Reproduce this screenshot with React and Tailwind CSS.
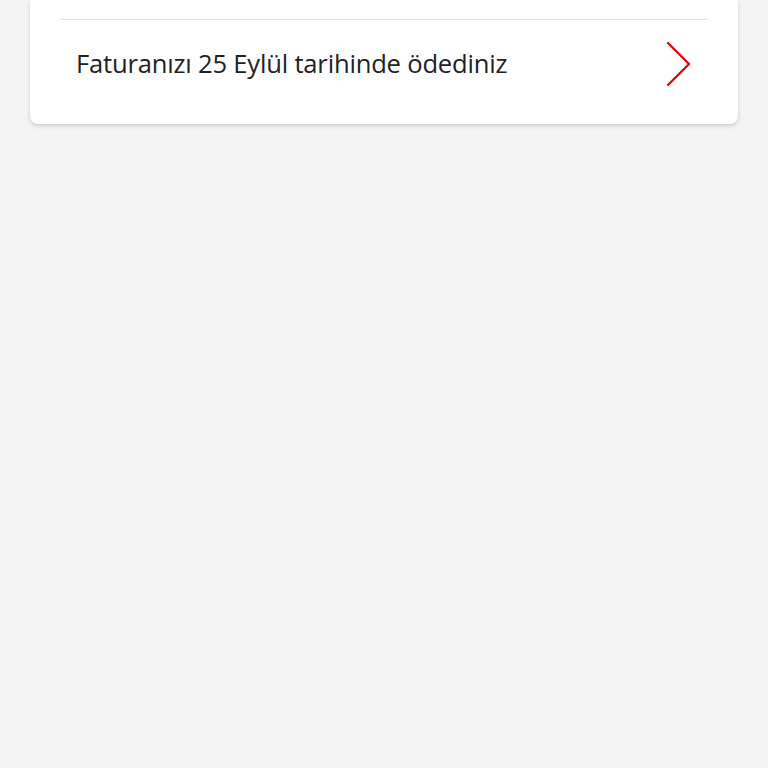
export default function App() {
  return (
    <div className="min-h-[768px] w-full bg-[#f4f4f4] pt-0" style={{ fontFamily: '"Open Sans", "Noto Sans", sans-serif' }}>
      <div className="mx-[30px] rounded-b-lg bg-white pb-[16px] shadow-[0_2px_4px_rgba(0,0,0,0.16)]">
        <div className="h-[19px]" />
        <div className="mx-[30px] h-px bg-[#e2e2e2]" />
        <div className="flex h-[88px] items-center justify-between pl-[46px] pr-[46px]">
          <span className="text-[25.6px] leading-none text-[#222222] tracking-[-0.2px]">Faturanızı 25 Eylül tarihinde ödediniz</span>
          <svg width="26" height="46" viewBox="0 0 26 46" fill="none">
            <path d="M2 2 L23 23 L2 44" stroke="#e60000" strokeWidth="2.2" strokeLinecap="round" strokeLinejoin="miter" />
          </svg>
        </div>
      </div>
    </div>
  );
}
